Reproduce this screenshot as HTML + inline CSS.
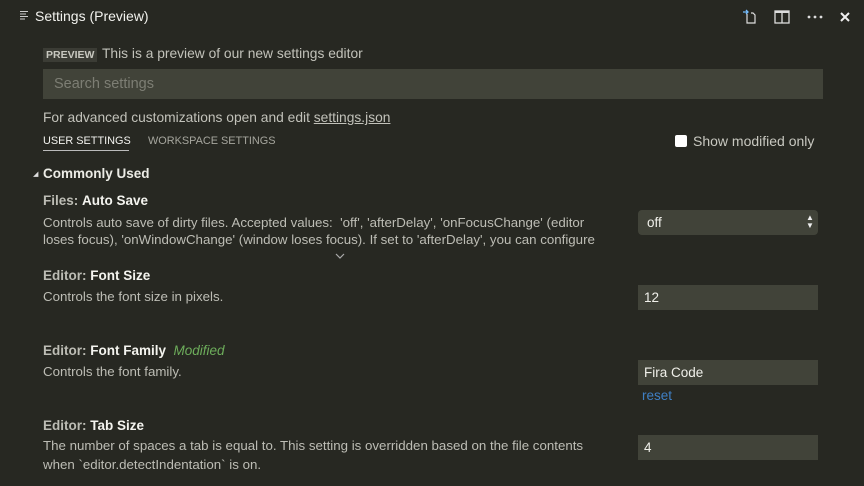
<!DOCTYPE html>
<html><head><meta charset="utf-8"><style>
*{margin:0;padding:0;box-sizing:border-box}
body{width:864px;height:486px;background:#272822;font-family:"Liberation Sans",sans-serif;color:#c2c2ba;font-size:13.5px;position:relative;overflow:hidden}
.a{position:absolute;white-space:nowrap}
.lbl{color:#bdbdb5;font-weight:bold}
.lbl b{color:#f4f4ef}
.inp{position:absolute;background:#414339;color:#f0f0ea;font-size:13.5px;padding-left:6px;line-height:26px;height:25px}
.desc{color:#bdbdb5;font-size:13.3px}
</style></head><body>
<svg class="a" style="left:19px;top:10px" width="10" height="11" viewBox="0 0 10 11"><g stroke="#ccc" stroke-width="1"><line x1="1" y1="1.5" x2="9" y2="1.5"/><line x1="1" y1="4" x2="7" y2="4"/><line x1="1" y1="6.5" x2="9" y2="6.5"/><line x1="1" y1="9" x2="6" y2="9"/></g></svg>
<div class="a" style="left:35px;top:8px;font-size:14px;color:#f2f2ee">Settings (Preview)</div>
<svg class="a" style="left:742px;top:9px" width="16" height="16" viewBox="0 0 16 16"><path d="M5 5v9h8V6l-2-2H9" fill="none" stroke="#ddd" stroke-width="1.2"/><path d="M1 3h5M4 1l2 2-2 2" fill="none" stroke="#75beff" stroke-width="1.3"/></svg>
<svg class="a" style="left:774px;top:10px" width="16" height="14" viewBox="0 0 16 14"><rect x="1" y="1" width="14" height="12" fill="none" stroke="#ddd" stroke-width="1.3"/><line x1="1" y1="2" x2="15" y2="2" stroke="#ddd" stroke-width="2"/><line x1="8" y1="1" x2="8" y2="13" stroke="#ddd" stroke-width="1.3"/></svg>
<svg class="a" style="left:807px;top:15px" width="16" height="4" viewBox="0 0 16 4"><circle cx="2" cy="2" r="1.4" fill="#ddd"/><circle cx="8" cy="2" r="1.4" fill="#ddd"/><circle cx="14" cy="2" r="1.4" fill="#ddd"/></svg>
<svg class="a" style="left:840px;top:12px" width="10" height="10" viewBox="0 0 10 10"><path d="M1 1l8 8M9 1L1 9" stroke="#eee" stroke-width="2"/></svg>
<div class="a" style="left:43px;top:48px;background:#3b3c35;color:#c8c8c0;font-size:10.5px;font-weight:bold;padding:1px 3px;line-height:12px">PREVIEW</div>
<div class="a" style="left:102px;top:46px;color:#c2c2ba;font-size:13.8px">This is a preview of our new settings editor</div>
<div class="a" style="left:43px;top:69px;width:780px;height:30px;background:#414339"></div>
<div class="a" style="left:54px;top:76px;color:#7d7e74;font-size:14.5px">Search settings</div>
<div class="a" style="left:43px;top:110px;font-size:13.8px">For advanced customizations open and edit <span style="text-decoration:underline">settings.json</span></div>
<div class="a" style="left:43px;top:135px;font-size:10.9px;color:#f2f2ee">USER SETTINGS</div>
<div class="a" style="left:43px;top:150px;width:86px;height:1px;background:#bbb"></div>
<div class="a" style="left:148px;top:135px;font-size:10.9px;color:#a6a69e">WORKSPACE SETTINGS</div>
<div class="a" style="left:675px;top:135px;width:12px;height:12px;background:#fff;border-radius:2px"></div>
<div class="a" style="left:693px;top:133px;color:#c8c8c0;font-size:14px">Show modified only</div>
<div class="a" style="left:33px;top:170px;font-size:7px;color:#ddd">◢</div>
<div class="a" style="left:43px;top:166px;font-weight:bold;color:#ececE6">Commonly Used</div>
<div class="a lbl" style="left:43px;top:193px">Files: <b>Auto Save</b></div>
<div class="a desc" style="left:43px;top:215px">Controls auto save of dirty files. Accepted values:&nbsp; 'off', 'afterDelay', 'onFocusChange' (editor</div>
<div class="a desc" style="left:43px;top:232px">loses focus), 'onWindowChange' (window loses focus). If set to 'afterDelay', you can configure</div>
<svg class="a" style="left:335px;top:253px" width="10" height="7" viewBox="0 0 10 7"><path d="M1 1l4 4 4-4" fill="none" stroke="#aaa" stroke-width="1.2"/></svg>
<div class="inp" style="left:638px;top:210px;width:180px;border-radius:4px;padding-left:9px">off</div>
<div class="a" style="left:806px;top:214px;font-size:8px;color:#eee;line-height:8px">▲<br>▼</div>
<div class="a lbl" style="left:43px;top:268px">Editor: <b>Font Size</b></div>
<div class="a desc" style="left:43px;top:289px">Controls the font size in pixels.</div>
<div class="inp" style="left:638px;top:285px;width:180px">12</div>
<div class="a lbl" style="left:43px;top:343px">Editor: <b>Font Family</b> <span style="color:#6dad5b;font-weight:normal;font-style:italic">&nbsp;Modified</span></div>
<div class="a desc" style="left:43px;top:364px">Controls the font family.</div>
<div class="inp" style="left:638px;top:360px;width:180px">Fira Code</div>
<div class="a" style="left:642px;top:388px;color:#3f7fc4">reset</div>
<div class="a lbl" style="left:43px;top:418px">Editor: <b>Tab Size</b></div>
<div class="a desc" style="left:43px;top:438px">The number of spaces a tab is equal to. This setting is overridden based on the file contents</div>
<div class="a desc" style="left:43px;top:457px">when `editor.detectIndentation` is on.</div>
<div class="inp" style="left:638px;top:435px;width:180px">4</div>
</body></html>
